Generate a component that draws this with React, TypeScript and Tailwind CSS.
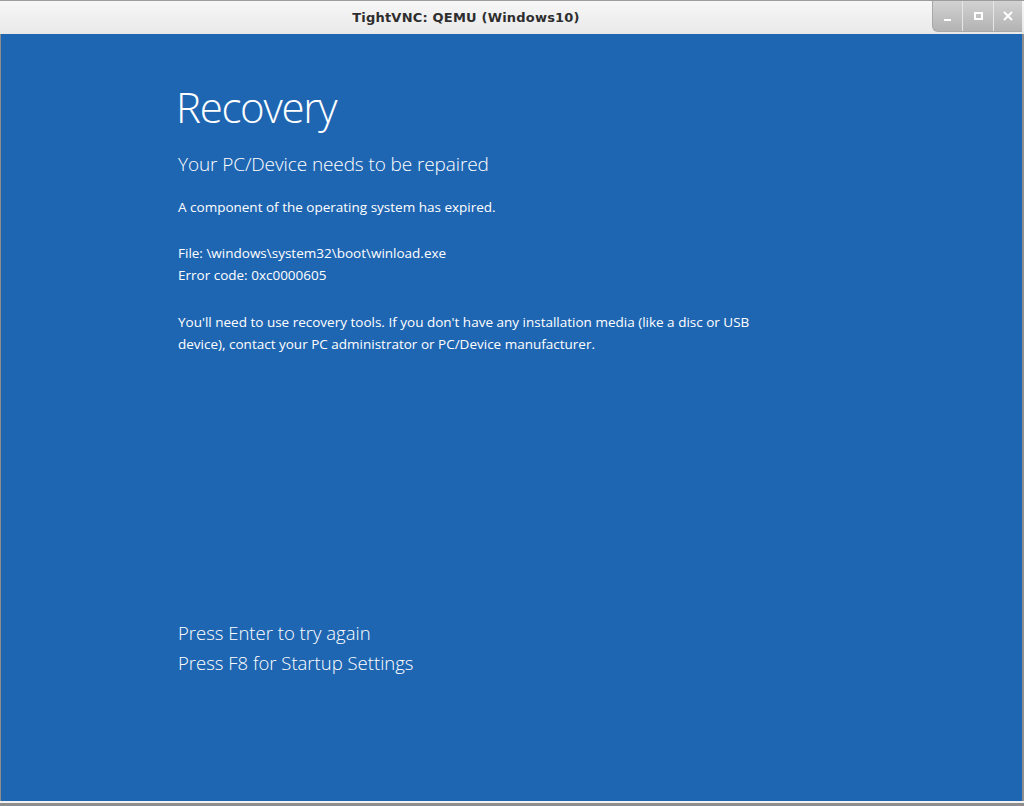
const App = () => {
    const body = "font-['Open_Sans',sans-serif] text-[13.5px] leading-[22px] text-white";
    return (
        <main className="w-[1024px] h-[806px] flex flex-col bg-[#8e8e8e] overflow-hidden">
            {/* window title bar */}
            <header className="relative h-[34px] shrink-0 border-t border-[#9c9c9c] bg-gradient-to-b from-[#f7f7f7] to-[#e9e9e9] flex items-center justify-center">
                <span className="font-['DejaVu_Sans',sans-serif] text-[13px] font-bold text-[#2e2e2e] tracking-[0.2px] -ml-[92px]">
                    TightVNC: QEMU (Windows10)
                </span>
                <div className="absolute right-[2px] top-0 h-[31px] flex rounded-bl-[6px] overflow-hidden border-l border-b border-[#a8a8a8] bg-gradient-to-b from-[#d2d2d2] to-[#b3b3b3]">
                    <div className="w-[30px] flex items-center justify-center border-r border-[#e6e6e6]">
                        <span className="block w-[7px] h-[2px] bg-white mt-[8px]" />
                    </div>
                    <div className="w-[31px] flex items-center justify-center border-r border-[#e6e6e6]">
                        <span className="block w-[9px] h-[8px] border-2 border-white" />
                    </div>
                    <div className="w-[28px] flex items-center justify-center">
                        <svg width="10" height="10" viewBox="0 0 10 10">
                            <path d="M1 1 L9 9 M9 1 L1 9" stroke="white" strokeWidth="2" />
                        </svg>
                    </div>
                </div>
            </header>

            {/* vnc screen */}
            <section className="h-[767px] shrink-0 ml-px mr-[2px] bg-[#1f66b2] flex flex-col pl-[175px] text-white">
                <h1 className="mt-[48px] font-['Open_Sans',sans-serif] font-light text-[42px] leading-[50px] tracking-[-1.3px]">
                    Recovery
                </h1>
                <h2 className="mt-[19px] ml-[2px] font-['Open_Sans',sans-serif] font-light text-[19px] leading-[26px] tracking-[-0.1px]">
                    Your PC/Device needs to be repaired
                </h2>
                <div className={"mt-[19px] ml-[2px] " + body}>
                    <p>A component of the operating system has expired.</p>
                    <p className="mt-[24px]">File: \windows\system32\boot\winload.exe</p>
                    <p>Error code: 0xc0000605</p>
                    <p className="mt-[25px] w-[600px]">
                        You'll need to use recovery tools. If you don't have any installation media (like a disc or USB device), contact your PC administrator or PC/Device manufacturer.
                    </p>
                </div>
                <div className="mt-auto mb-[123px] ml-[2px] font-['Open_Sans',sans-serif] font-light text-[18.5px] leading-[30px]">
                    <p>Press Enter to try again</p>
                    <p>Press F8 for Startup Settings</p>
                </div>
            </section>
            <div className="h-[2px] shrink-0 bg-[#f2f2f2]" />
        </main>
    );
}

export default App;
